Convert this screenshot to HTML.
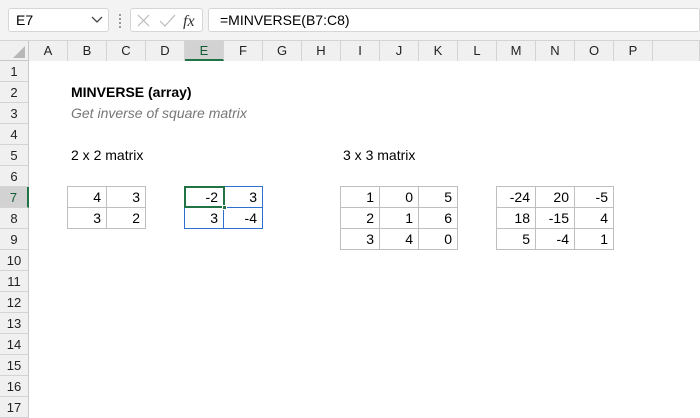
<!DOCTYPE html>
<html><head><style>
*{margin:0;padding:0;box-sizing:border-box}
body{width:700px;height:400px;overflow:hidden;background:#fff;font-family:"Liberation Sans",sans-serif;position:relative;font-size:13px;color:#000}
.a{position:absolute}
.ch{position:absolute;top:41px;height:20px;text-align:center;line-height:20px;font-size:13px;color:#222;border-right:1px solid #d4d4d4;background:#f0f0f0}
.rh{position:absolute;left:0;width:29px;height:21px;text-align:center;line-height:21px;font-size:13px;color:#222;border-bottom:1px solid #d4d4d4;background:#f0f0f0;border-right:1px solid #c8c8c8}
.c{position:absolute;width:40px;height:22px;border:1px solid #bfbfbf;text-align:right;padding-right:5px;line-height:20px;font-size:14px}
.t{position:absolute;font-size:14px}
</style></head><body>
<div class="a" style="left:0;top:0;width:700px;height:41px;background:#f3f3f3;border-bottom:1px solid #d4d4d4"></div>
<div class="a" style="left:8px;top:8px;width:101px;height:24px;background:#fff;border:1px solid #d6d6d6;border-radius:3px;font-size:14px;line-height:22px;padding-left:7px">E7</div>
<svg class="a" style="left:91px;top:16px" width="12" height="8"><path d="M1 1 L6 6 L11 1" stroke="#444" stroke-width="1.3" fill="none"/></svg>
<div class="a" style="left:119px;top:14px;width:2px;height:14px;border-left:2px dotted #999"></div>
<div class="a" style="left:130px;top:8px;width:73px;height:24px;background:#fff;border:1px solid #d6d6d6;border-radius:3px"></div>
<svg class="a" style="left:136px;top:13px" width="60" height="16"><path d="M2 2L13 13M13 2L2 13" stroke="#bbb" stroke-width="1.2"/><path d="M24 8L29 13L39 2" stroke="#bbb" stroke-width="1.2" fill="none"/><text x="47" y="13" font-family="Liberation Serif" font-style="italic" font-size="16" fill="#333">fx</text></svg>
<div class="a" style="left:208px;top:8px;width:492px;height:24px;background:#fff;border:1px solid #d6d6d6;border-radius:3px;font-size:14px;line-height:22px;padding-left:11px">=MINVERSE(B7:C8)</div>
<div class="a" style="left:0;top:41px;width:29px;height:20px;background:#f0f0f0;border-right:1px solid #c8c8c8"></div>
<svg class="a" style="left:13px;top:46px" width="13" height="13"><path d="M12 0L12 12L0 12Z" fill="#b8b8b8"/></svg>
<div class="a" style="left:0;top:60px;width:700px;height:1px;background:#c8c8c8"></div>
<div class="ch" style="left:29px;width:39px">A</div><div class="ch" style="left:68px;width:39px">B</div><div class="ch" style="left:107px;width:39px">C</div><div class="ch" style="left:146px;width:39px">D</div><div class="ch" style="left:185px;width:39px;background:#d2d2d2;border-bottom:2px solid #217346;color:#0e5c2f">E</div><div class="ch" style="left:224px;width:39px">F</div><div class="ch" style="left:263px;width:39px">G</div><div class="ch" style="left:302px;width:39px">H</div><div class="ch" style="left:341px;width:39px">I</div><div class="ch" style="left:380px;width:39px">J</div><div class="ch" style="left:419px;width:39px">K</div><div class="ch" style="left:458px;width:39px">L</div><div class="ch" style="left:497px;width:39px">M</div><div class="ch" style="left:536px;width:39px">N</div><div class="ch" style="left:575px;width:39px">O</div><div class="ch" style="left:614px;width:39px">P</div><div class="ch" style="left:653px;width:47px"></div>
<div class="rh" style="top:61px">1</div><div class="rh" style="top:82px">2</div><div class="rh" style="top:103px">3</div><div class="rh" style="top:124px">4</div><div class="rh" style="top:145px">5</div><div class="rh" style="top:166px">6</div><div class="rh" style="top:187px;background:#d2d2d2;border-right:2px solid #217346;color:#0e5c2f">7</div><div class="rh" style="top:208px">8</div><div class="rh" style="top:229px">9</div><div class="rh" style="top:250px">10</div><div class="rh" style="top:271px">11</div><div class="rh" style="top:292px">12</div><div class="rh" style="top:313px">13</div><div class="rh" style="top:334px">14</div><div class="rh" style="top:355px">15</div><div class="rh" style="top:376px">16</div><div class="rh" style="top:397px">17</div>
<div class="t" style="left:71px;top:84px;font-weight:bold">MINVERSE (array)</div>
<div class="t" style="left:71px;top:105px;font-style:italic;color:#777">Get inverse of square matrix</div>
<div class="t" style="left:71px;top:147px">2 x 2 matrix</div>
<div class="t" style="left:343px;top:147px">3 x 3 matrix</div>
<div class="c" style="left:67px;top:186px">4</div><div class="c" style="left:106px;top:186px">3</div>
<div class="c" style="left:67px;top:207px">3</div><div class="c" style="left:106px;top:207px">2</div>
<div class="c" style="left:184px;top:186px;border-color:#2f6fd0">-2</div><div class="c" style="left:223px;top:186px;border-color:#2f6fd0">3</div>
<div class="c" style="left:184px;top:207px;border-color:#2f6fd0">3</div><div class="c" style="left:223px;top:207px;border-color:#2f6fd0">-4</div>
<div class="a" style="left:184px;top:186px;width:41px;height:22px;border:2px solid #217346"></div>
<div class="a" style="left:222px;top:205px;width:5px;height:5px;background:#217346;border:1px solid #fff"></div>
<div class="c" style="left:340px;top:186px">1</div><div class="c" style="left:379px;top:186px">0</div><div class="c" style="left:418px;top:186px">5</div>
<div class="c" style="left:340px;top:207px">2</div><div class="c" style="left:379px;top:207px">1</div><div class="c" style="left:418px;top:207px">6</div>
<div class="c" style="left:340px;top:228px">3</div><div class="c" style="left:379px;top:228px">4</div><div class="c" style="left:418px;top:228px">0</div>
<div class="c" style="left:496px;top:186px">-24</div><div class="c" style="left:535px;top:186px">20</div><div class="c" style="left:574px;top:186px">-5</div>
<div class="c" style="left:496px;top:207px">18</div><div class="c" style="left:535px;top:207px">-15</div><div class="c" style="left:574px;top:207px">4</div>
<div class="c" style="left:496px;top:228px">5</div><div class="c" style="left:535px;top:228px">-4</div><div class="c" style="left:574px;top:228px">1</div>
</body></html>
